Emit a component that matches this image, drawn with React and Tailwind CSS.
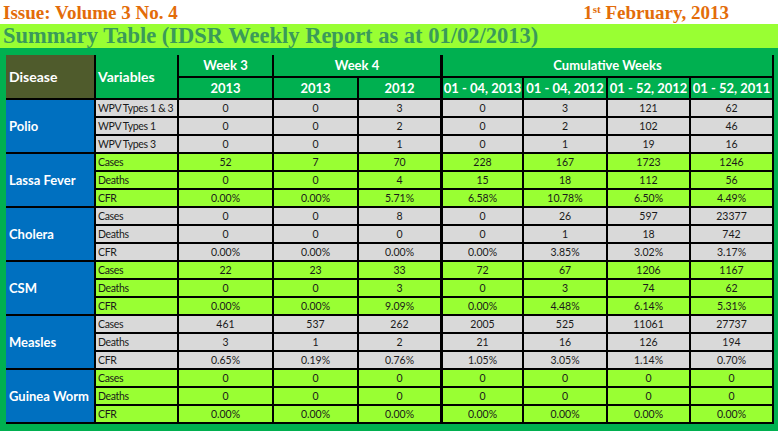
import React from "react";

const groups = [
  {
    name: "Polio",
    lime: false,
    rows: [
      ["WPV Types 1 & 3", "0", "0", "3", "0", "3", "121", "62"],
      ["WPV Types 1", "0", "0", "2", "0", "2", "102", "46"],
      ["WPV Types 3", "0", "0", "1", "0", "1", "19", "16"],
    ],
  },
  {
    name: "Lassa Fever",
    lime: true,
    rows: [
      ["Cases", "52", "7", "70", "228", "167", "1723", "1246"],
      ["Deaths", "0", "0", "4", "15", "18", "112", "56"],
      ["CFR", "0.00%", "0.00%", "5.71%", "6.58%", "10.78%", "6.50%", "4.49%"],
    ],
  },
  {
    name: "Cholera",
    lime: false,
    rows: [
      ["Cases", "0", "0", "8", "0", "26", "597", "23377"],
      ["Deaths", "0", "0", "0", "0", "1", "18", "742"],
      ["CFR", "0.00%", "0.00%", "0.00%", "0.00%", "3.85%", "3.02%", "3.17%"],
    ],
  },
  {
    name: "CSM",
    lime: true,
    rows: [
      ["Cases", "22", "23", "33", "72", "67", "1206", "1167"],
      ["Deaths", "0", "0", "3", "0", "3", "74", "62"],
      ["CFR", "0.00%", "0.00%", "9.09%", "0.00%", "4.48%", "6.14%", "5.31%"],
    ],
  },
  {
    name: "Measles",
    lime: false,
    rows: [
      ["Cases", "461", "537", "262", "2005", "525", "11061", "27737"],
      ["Deaths", "3", "1", "2", "21", "16", "126", "194"],
      ["CFR", "0.65%", "0.19%", "0.76%", "1.05%", "3.05%", "1.14%", "0.70%"],
    ],
  },
  {
    name: "Guinea Worm",
    lime: true,
    rows: [
      ["Cases", "0", "0", "0", "0", "0", "0", "0"],
      ["Deaths", "0", "0", "0", "0", "0", "0", "0"],
      ["CFR", "0.00%", "0.00%", "0.00%", "0.00%", "0.00%", "0.00%", "0.00%"],
    ],
  },
];

const subHeads = ["2013", "2013", "2012", "01 - 04, 2013", "01 - 04, 2012", "01 - 52, 2012", "01 - 52, 2011"];

export default function App() {
  const hdr = "bg-[#00b050] text-white font-bold text-[13px] leading-none flex items-center";
  return (
    <div className="w-[778px] h-[437px] overflow-hidden bg-white" style={{ fontFamily: "Lato, 'Open Sans', sans-serif" }}>
      <div
        className="h-[24px] flex items-center justify-between pl-[3px] pr-[49px] text-[#e36c09] font-bold text-[19px] leading-none"
        style={{ fontFamily: "'Liberation Serif', 'Times New Roman', serif" }}
      >
        <span>Issue: Volume 3 No. 4</span>
        <span>
          1<sup className="text-[11px]">st</sup> February, 2013
        </span>
      </div>
      <div
        className="h-[24px] bg-[#99ff33] flex items-center pl-[3px] text-[#3a9a5a] font-bold text-[22.5px] leading-none"
        style={{ fontFamily: "'Liberation Serif', 'Times New Roman', serif" }}
      >
        Summary Table (IDSR Weekly Report as at 01/02/2013)
      </div>
      <div className="bg-[#00b050] pl-[6px] pr-[4px] pt-[7px] pb-[7px]">
        <div className="grid grid-cols-[88px_81px_93px_83px_81px_80px_82px_81px_81px] grid-rows-[21px_20px_repeat(18,16px)] gap-[2px] bg-black border-r-2 border-b-2 border-black w-[768px]">
          <div className={`${hdr} row-span-2 bg-[#4f5b2c] pl-[3px] text-[14px]`}>Disease</div>
          <div className={`${hdr} row-span-2 pl-[2px] text-[14px]`}>Variables</div>
          <div className={`${hdr} justify-center`}>Week 3</div>
          <div className={`${hdr} col-span-2 justify-center`}>Week 4</div>
          <div className={`${hdr} col-span-4 justify-center border-l border-black`}>Cumulative Weeks</div>
          {subHeads.map((h, i) => (
            <div key={i} className={`${hdr} justify-center ${i === 3 ? "border-l border-black" : ""}`}>
              {h}
            </div>
          ))}
          {groups.map((g) => (
            <React.Fragment key={g.name}>
              <div className="row-span-3 bg-[#0070c0] text-white font-bold text-[13px] leading-none flex items-center pl-[3px] whitespace-nowrap">
                {g.name}
              </div>
              {g.rows.map((r, ri) =>
                r.map((v, ci) => (
                  <div
                    key={`${ri}-${ci}`}
                    className={`${g.lime ? "bg-[#99ff33]" : "bg-[#d9d9d9]"} leading-none text-[#1a1a1a] flex items-center whitespace-nowrap overflow-hidden ${
                      ci === 0 ? "pl-[2px] text-[10.5px] tracking-[-0.35px]" : "justify-center text-[10.5px]"
                    } ${ci === 4 ? "border-l border-black" : ""}`}
                  >
                    {v}
                  </div>
                ))
              )}
            </React.Fragment>
          ))}
        </div>
      </div>
      <div className="h-[6px] overflow-hidden pl-[636px] pt-[3px]">
        <span className="text-[#333] font-bold text-[13px] leading-none block" style={{ fontFamily: "'Liberation Serif', serif" }}>
          2013
        </span>
      </div>
    </div>
  );
}
